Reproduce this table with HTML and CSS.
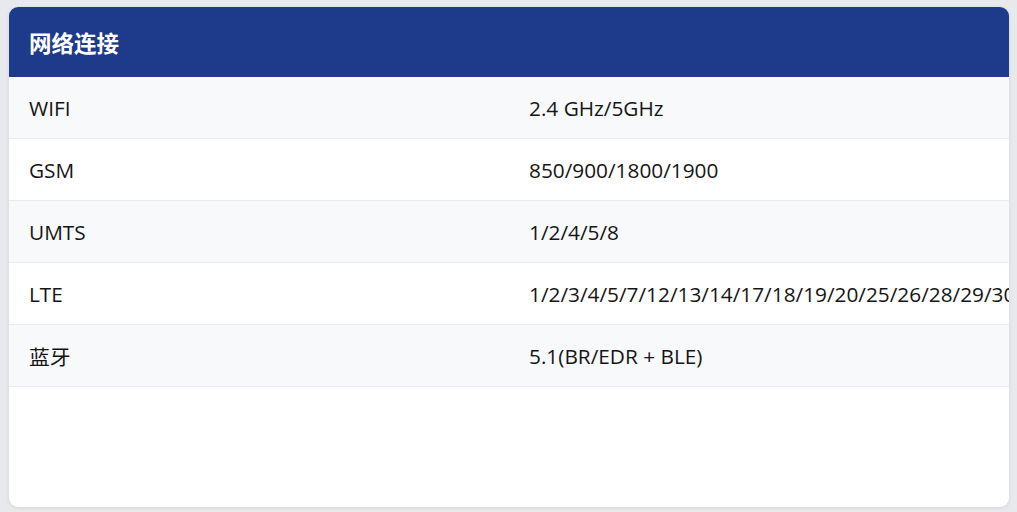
FILE: index.html
```html
<!DOCTYPE html>
<html lang="zh">
<head>
<meta charset="utf-8">
<link rel="stylesheet" href="styles.css">
</head>
<body>
<div class="card">
  <div class="card-header">网络连接</div>
  <div class="spec-list">
    <div class="spec-row alt"><div class="spec-label">WIFI</div><div class="spec-value">2.4 GHz/5GHz</div></div>
    <div class="spec-row"><div class="spec-label">GSM</div><div class="spec-value">850/900/1800/1900</div></div>
    <div class="spec-row alt"><div class="spec-label">UMTS</div><div class="spec-value">1/2/4/5/8</div></div>
    <div class="spec-row"><div class="spec-label">LTE</div><div class="spec-value">1/2/3/4/5/7/12/13/14/17/18/19/20/25/26/28/29/30/38/39/40/41/66/71</div></div>
    <div class="spec-row alt"><div class="spec-label">蓝牙</div><div class="spec-value">5.1(BR/EDR + BLE)</div></div>
  </div>
</div>
</body>
</html>
```
FILE: styles.css
```css
html, body {
  margin: 0;
  background: #e8e9ed;
}
body {
  padding: 7px 8px 5px 9px;
  font-family: "Open Sans", "Noto Sans CJK SC", sans-serif;
  color: #151515;
}
.card {
  height: 500px;
  background: #ffffff;
  border-radius: 9px;
  overflow: hidden;
  box-shadow: 0 1px 4px rgba(0, 0, 0, 0.08);
}
.card-header {
  height: 70px;
  box-sizing: border-box;
  padding: 0 20px;
  display: flex;
  align-items: center;
  background: #1e3a8a;
  color: #ffffff;
  font-family: "Noto Sans CJK SC", sans-serif;
  font-size: 22.5px;
  font-weight: 700;
}
.spec-row {
  display: grid;
  grid-template-columns: minmax(0, 1fr) minmax(0, 1fr);
  height: 62px;
  box-sizing: border-box;
  border-bottom: 1px solid #e9ebef;
  align-items: center;
  font-size: 20.8px;
}
.spec-row.alt {
  background: #f8f9fb;
}
.spec-label,
.spec-value {
  padding: 0 20px;
  white-space: nowrap;
}
```
